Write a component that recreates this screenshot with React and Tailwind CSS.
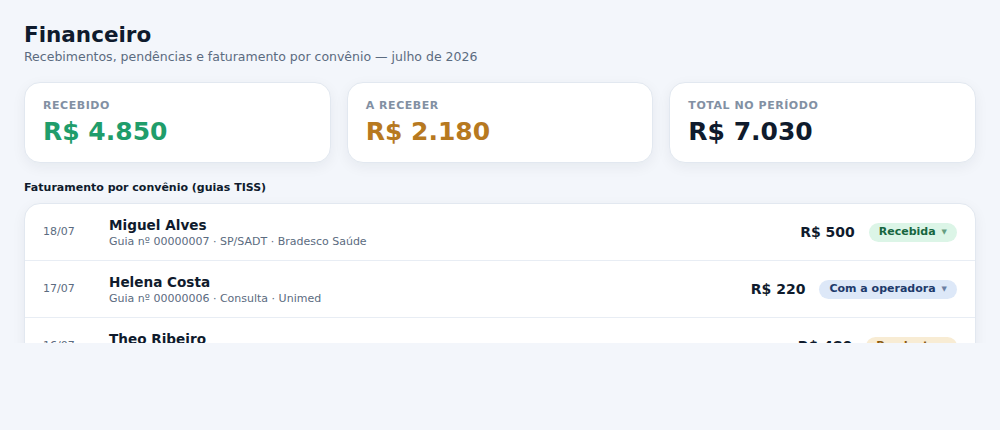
const STATS = [
  { label: 'Recebido', value: 'R$ 4.850', color: 'text-[#1f9d6b]' },
  { label: 'A receber', value: 'R$ 2.180', color: 'text-[#b7791f]' },
  { label: 'Total no período', value: 'R$ 7.030', color: 'text-[#0f1b2d]' },
]

const GUIAS = [
  {
    date: '18/07',
    name: 'Miguel Alves',
    info: 'Guia nº 00000007 · SP/SADT · Bradesco Saúde',
    value: 'R$ 500',
    status: 'Recebida',
    badge: 'bg-[#dcf5e7] text-[#17663f]',
  },
  {
    date: '17/07',
    name: 'Helena Costa',
    info: 'Guia nº 00000006 · Consulta · Unimed',
    value: 'R$ 220',
    status: 'Com a operadora',
    badge: 'bg-[#dde8f8] text-[#1e3a6b]',
  },
  {
    date: '16/07',
    name: 'Theo Ribeiro',
    info: 'Guia nº 00000005 · Consulta · Amil',
    value: 'R$ 480',
    status: 'Pendente',
    badge: 'bg-[#f8ecd4] text-[#8a5a10]',
  },
]

export default function App() {
  return (
    <div className="min-h-[430px] bg-[#f3f6fb] font-['DejaVu_Sans',sans-serif]">
      <div className="h-[343px] overflow-hidden px-6 pt-[21px]">
        <h1 className="text-[21.5px] font-bold leading-7 text-[#0f1b2d]">Financeiro</h1>
        <p className="text-[12.5px] leading-4 text-[#5b6b80]">
          Recebimentos, pendências e faturamento por convênio — julho de 2026
        </p>

        <div className="mt-[17px] grid grid-cols-3 gap-4">
          {STATS.map((s) => (
            <div
              key={s.label}
              className="h-[81px] rounded-2xl border border-[#e2e8f0] bg-white px-[18px] pt-[15px] shadow-[0_4px_14px_rgba(15,27,45,0.06)]"
            >
              <p className="text-[11px] font-bold uppercase leading-4 tracking-[0.05em] text-[#8290a3]">
                {s.label}
              </p>
              <p className={`mt-[2px] text-[25px] font-bold leading-8 ${s.color}`}>{s.value}</p>
            </div>
          ))}
        </div>

        <p className="mt-[17px] text-[11px] font-bold text-[#0f1b2d]">
          Faturamento por convênio (guias TISS)
        </p>

        <div className="mt-[6px] overflow-hidden rounded-2xl border border-[#e2e8f0] bg-white shadow-[0_4px_14px_rgba(15,27,45,0.06)]">
          {GUIAS.map((g) => (
            <div
              key={g.date}
              className="flex h-[57px] items-center border-b border-[#e8edf4] pl-[18px] pr-[18px] pt-[2px]"
            >
              <span className="w-[66px] text-[11px] text-[#5b6b80]">{g.date}</span>
              <div className="flex-1">
                <p className="text-[13.6px] font-bold leading-[18px] text-[#0f1b2d]">{g.name}</p>
                <p className="text-[11px] leading-[15px] text-[#5b6b80]">{g.info}</p>
              </div>
              <span className="mr-[14px] text-[14px] font-bold text-[#0f1b2d]">{g.value}</span>
              <span
                className={`flex h-[19px] items-center gap-[6px] rounded-full px-[10px] text-[11px] font-bold ${g.badge}`}
              >
                {g.status}
                <span className="text-[7px] opacity-60">▼</span>
              </span>
            </div>
          ))}
        </div>
      </div>
    </div>
  )
}
